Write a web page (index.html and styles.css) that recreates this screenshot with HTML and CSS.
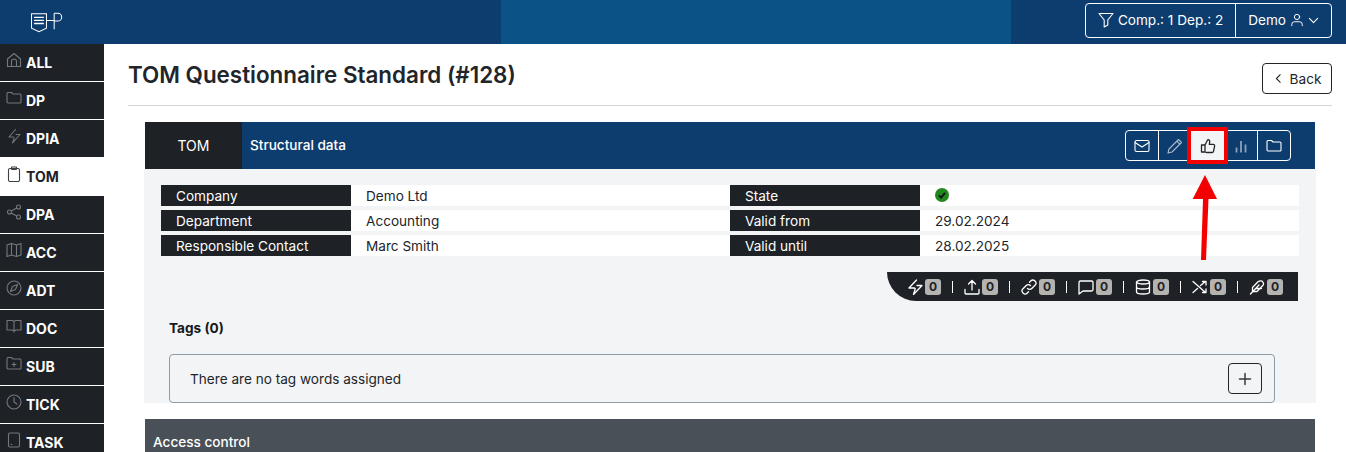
FILE: index.html
```html
<!DOCTYPE html>
<html lang="en">
<head>
    <meta charset="UTF-8">
    <title>TOM Questionnaire Standard</title>
    <link rel="stylesheet" href="styles.css">
</head>
<body>
    <header class="topbar">
        <div class="logo">
            <svg width="34" height="22" viewBox="0 0 33 21" fill="none" stroke="#fff" stroke-width="1">
                <path d="M.5 1.500h14.500v14l-7.250 3.500-7.250-3.500z"/>
                <path d="M3 5h9.500M3 8h9.500M3 11h9.500" stroke-width="1.300"/>
                <path d="M15 8h7.500M22.500 1v15.500M22.500 1h3.500a3.800 3.800 0 0 1 0 7.600h-3.500"/>
            </svg>
        </div>
        <div class="top-actions">
            <div class="top-btn">
                <svg class="ico" viewBox="0 0 16 16"><path d="M1 1.500h14l-5.200 6.500v5l-3.600 2v-7z"/></svg>
                Comp.: 1 Dep.: 2
            </div>
            <div class="top-btn">
                Demo
                <svg class="ico user-ico" viewBox="0 0 16 16"><circle cx="8" cy="4.500" r="3"/><path d="M2 14.500v-1.500a3 3 0 0 1 3-3h6a3 3 0 0 1 3 3v1.500"/></svg>
                <svg class="ico-sm" viewBox="0 0 16 16"><path d="M2 5l6 6 6-6"/></svg>
            </div>
        </div>
    </header>

    <div class="layout">
        <nav class="sidebar">
            <a class="nav-item"><svg class="ico" viewBox="0 0 16 16"><path d="M1.500 14.500V7L8 1.500 14.500 7v7.500zM5.500 14.500v-5a2.500 2.500 0 0 1 5 0v5"/></svg>ALL</a>
            <a class="nav-item"><svg class="ico" viewBox="0 0 16 16"><path d="M1 3.500a1 1 0 0 1 1-1h3.500l1.500 1.500h7a1 1 0 0 1 1 1v7a1 1 0 0 1-1 1H2a1 1 0 0 1-1-1z"/></svg>DP</a>
            <a class="nav-item"><svg class="ico" viewBox="0 0 16 16"><path d="M9.500 1.500L3 9h4.500M10 6.500h4L6.500 15l1.800-5"/></svg>DPIA</a>
            <a class="nav-item active"><svg class="ico" viewBox="0 0 16 16"><rect x="2.500" y="2.500" width="11" height="13" rx="1.500"/><rect x="5.500" y="1" width="5" height="2.500" rx=".5"/></svg>TOM</a>
            <a class="nav-item"><svg class="ico" viewBox="0 0 16 16"><circle cx="12.500" cy="3" r="2"/><circle cx="3.500" cy="8" r="2"/><circle cx="12.500" cy="13" r="2"/><path d="M5.300 7l5.400-3M5.300 9l5.400 3"/></svg>DPA</a>
            <a class="nav-item"><svg class="ico" viewBox="0 0 16 16"><path d="M1 3l4.500-1.500 5 1.500L15 1.500V13l-4.500 1.500-5-1.500L1 14.500zM5.500 1.500V13M10.500 3v11.500"/></svg>ACC</a>
            <a class="nav-item"><svg class="ico" viewBox="0 0 16 16"><circle cx="8" cy="8" r="7"/><path d="M11.500 4.500L9.500 9.500 4.500 11.500 6.500 6.500z"/></svg>ADT</a>
            <a class="nav-item"><svg class="ico" viewBox="0 0 16 16"><path d="M8 3.500v10.500M1 2.500h5.500L8 3.500l1.500-1H15v9.500h-5l-2 1-2-1H1z"/></svg>DOC</a>
            <a class="nav-item"><svg class="ico" viewBox="0 0 16 16"><path d="M1 2.500a1 1 0 0 1 1-1h3.500l1.500 1.500h7a1 1 0 0 1 1 1v8a1 1 0 0 1-1 1H2a1 1 0 0 1-1-1zM8 6.500v4M6 8.500h4"/></svg>SUB</a>
            <a class="nav-item"><svg class="ico" viewBox="0 0 16 16"><circle cx="8" cy="8" r="7"/><path d="M8 3.500V8l3 2"/></svg>TICK</a>
            <a class="nav-item"><svg class="ico" viewBox="0 0 16 16"><rect x="2.500" y="1" width="11" height="14" rx="1.500"/><path d="M5 12.500h.8"/></svg>TASK</a>
        </nav>

        <main class="content">
            <div class="page-head">
                <h1>TOM Questionnaire Standard (#128)</h1>
                <button class="back-btn">
                    <svg class="ico-sm" viewBox="0 0 16 16"><path d="M10.500 2.500L5 8l5.500 5.500"/></svg>
                    Back
                </button>
            </div>

            <section class="panel">
                <div class="panel-head">
                    <div class="panel-tab">TOM</div>
                    <div class="panel-title">Structural data</div>
                    <div class="tool-group">
                        <span class="tool"><svg class="ico" viewBox="0 0 16 16"><rect x="1" y="2.500" width="14" height="11" rx="1.500"/><path d="M1 4.500l7 4.500 7-4.500"/></svg></span>
                        <span class="tool muted"><svg class="ico" viewBox="0 0 16 16"><path d="M11.500 1.500l3 3-9.500 9.500-4 1 1-4zM9.800 3.200l3 3"/></svg></span>
                        <span class="tool highlighted"><svg class="ico" viewBox="0 0 16 16"><path d="M5 7l2.700-5.200c1.300-.3 2.300.6 2 2L9.300 6.300h3.900c1 0 1.600.9 1.400 1.800l-1 5c-.2.800-.8 1.400-1.600 1.400H6.500L5 14H1.500V7zM5 7v7"/></svg></span>
                        <span class="tool bars"><svg class="ico" viewBox="0 0 16 16"><path d="M3.500 9.500v5M8 3v11.500M12.500 6.500v8"/></svg></span>
                        <span class="tool"><svg class="ico" viewBox="0 0 16 16"><path d="M1 3.500a1 1 0 0 1 1-1h3.500l1.500 1.500h7a1 1 0 0 1 1 1v7a1 1 0 0 1-1 1H2a1 1 0 0 1-1-1z"/></svg></span>
                    </div>
                </div>

                <div class="panel-body">
                    <div class="info-grid">
                        <div class="info-label">Company</div><div class="info-value">Demo Ltd</div>
                        <div class="info-label">State</div>
                        <div class="info-value"><span class="state-ok"><svg viewBox="0 0 16 16"><path d="M4.500 8.500l2.500 2.500 4.500-5.500"/></svg></span></div>
                        <div class="info-label">Department</div><div class="info-value">Accounting</div>
                        <div class="info-label">Valid from</div><div class="info-value">29.02.2024</div>
                        <div class="info-label">Responsible Contact</div><div class="info-value">Marc Smith</div>
                        <div class="info-label">Valid until</div><div class="info-value">28.02.2025</div>
                    </div>

                    <div class="counter-row">
                        <div class="counters">
                            <svg class="ico" viewBox="0 0 16 16"><path d="M9.500 1L2 9h5.500M10 6.500h5L6.500 15.500l1.800-6"/></svg><span class="badge">0</span><i class="sep"></i>
                            <svg class="ico" viewBox="0 0 16 16"><path d="M1 10.500V14a1 1 0 0 0 1 1h12a1 1 0 0 0 1-1v-3.500M8 11V1.500M4.500 5L8 1.500 11.500 5"/></svg><span class="badge">0</span><i class="sep"></i>
                            <svg class="ico" viewBox="0 0 16 16"><path d="M6.500 9.500a3 3 0 0 0 4.300 0l3.200-3.200a3 3 0 0 0-4.300-4.300L8.500 3.200M9.500 6.500a3 3 0 0 0-4.300 0L2 9.700A3 3 0 0 0 6.300 14l1.200-1.200"/></svg><span class="badge">0</span><i class="sep"></i>
                            <svg class="ico" viewBox="0 0 16 16"><path d="M2.500 2h11a1.500 1.500 0 0 1 1.500 1.500v7a1.500 1.500 0 0 1-1.500 1.500H5l-4 3V3.500A1.500 1.500 0 0 1 2.500 2z"/></svg><span class="badge">0</span><i class="sep"></i>
                            <svg class="ico" viewBox="0 0 16 16"><ellipse cx="8" cy="3" rx="6.500" ry="2"/><path d="M1.500 3v10c0 1.100 2.900 2 6.500 2s6.500-.9 6.500-2V3M1.500 8c0 1.100 2.900 2 6.500 2s6.500-.9 6.500-2"/></svg><span class="badge">0</span><i class="sep"></i>
                            <svg class="ico" viewBox="0 0 16 16"><path d="M1 2.500l12.500 11M1 13.500l4.500-4M8.500 6.500L13.500 2.500M10.500 2.500h3.500V6M10.500 13.500h3.500V10"/></svg><span class="badge">0</span><i class="sep"></i>
                            <svg class="ico" viewBox="0 0 16 16"><path d="M1.500 15L10 6M3.500 12.500V8.500L9 2.800c1.700-1.500 4-1.200 4.800 0 .9 1.200.8 3-.5 4.200L8 12.500zM6.500 9.500h6"/></svg><span class="badge">0</span>
                        </div>
                    </div>

                    <h2 class="tags-title">Tags (0)</h2>
                    <div class="tags-box">
                        <span>There are no tag words assigned</span>
                        <button class="add-btn"><svg class="ico" viewBox="0 0 16 16"><path d="M8 2.500v11M2.500 8h11" stroke-width="1.500"/></svg></button>
                    </div>
                </div>

                <div class="section-bar">Access control</div>
            </section>
        </main>
    </div>

    <!-- annotation added on the screenshot -->
    <div class="arrow">
        <svg width="30" height="90" viewBox="0 0 30 90"><path d="M14 3L26 27H17.500L15 88H10L12 27H1.700z" fill="#f40000"/></svg>
    </div>
</body>
</html>
```

FILE: styles.css
```css
* {
    box-sizing: border-box;
}

html, body {
    height: 452px;
    overflow: hidden;
}

body {
    margin: 0;
    font-family: Inter, "Liberation Sans", sans-serif;
    font-size: 13.6px;
    color: #212529;
    background: #ffffff;
    position: relative;
}

.ico, .ico-sm {
    width: 16px;
    height: 16px;
    fill: none;
    stroke: currentColor;
    stroke-width: 1.100;
    stroke-linecap: round;
    stroke-linejoin: round;
    flex: none;
}

.ico-sm {
    width: 11px;
    height: 11px;
    stroke-width: 1.600;
}

.topbar {
    height: 44px;
    display: flex;
    justify-content: space-between;
    align-items: center;
    padding: 0 14px 0 31px;
    background: linear-gradient(90deg, #0d3c6e 501px, #0b5286 501px, #0b5286 1011px, #0d3c6e 1011px);
}

.logo {
    display: flex;
    margin-top: 1px;
}

.top-actions {
    display: flex;
    height: 35px;
    border: 1px solid #ffffff;
    border-radius: 4px;
    color: #ffffff;
    margin-top: -4px;
}

.top-btn {
    display: flex;
    align-items: center;
    gap: 4px;
    padding: 0 12px;
}

.top-btn + .top-btn {
    border-left: 1px solid #ffffff;
}

.user-ico {
    width: 14px;
    height: 14px;
}

.layout {
    display: flex;
}

.sidebar {
    width: 104px;
    flex: none;
}

.nav-item {
    display: flex;
    align-items: center;
    gap: 4px;
    height: 38px;
    padding: 0 0 0 6px;
    background: #1e2126;
    color: #ffffff;
    font-weight: 700;
    font-size: 14px;
    border-bottom: 1px solid #ffffff;
    line-height: 1;
}

.nav-item .ico {
    color: #75787c;
    margin-top: -6px;
}

.nav-item.active {
    background: #ffffff;
    color: #1e2126;
}

.nav-item.active .ico {
    color: #3c4045;
}

.content {
    flex: 1;
    padding: 0 14px 0 24px;
}

.page-head {
    display: flex;
    justify-content: space-between;
    height: 62px;
    padding-top: 18px;
    border-bottom: 1px solid #d5d5d5;
}

h1 {
    margin: 0;
    font-size: 22.400px;
    font-weight: 600;
    line-height: 26px;
    color: #212529;
}

.back-btn {
    height: 31px;
    width: 70px;
    display: flex;
    align-items: center;
    justify-content: center;
    gap: 6px;
    font: 13.6px Inter, "Liberation Sans", sans-serif;
    color: #212529;
    background: #ffffff;
    border: 1px solid #212529;
    border-radius: 4px;
    margin-top: 1px;
}

.panel {
    margin: 16px 17px 0;
}

.panel-head {
    height: 47px;
    display: flex;
    align-items: center;
    background: #0d3c6e;
    color: #ffffff;
}

.panel-tab {
    width: 97px;
    height: 100%;
    display: flex;
    align-items: center;
    justify-content: center;
    background: #1e2126;
    font-size: 14px;
}

.panel-title {
    flex: 1;
    padding: 0 0 2px 8px;
    font-weight: 500;
}

.tool-group {
    display: flex;
    width: 166px;
    height: 31px;
    margin-right: 24px;
    border: 1px solid #ffffff;
    border-radius: 4px;
}

.tool {
    flex: 1;
    display: flex;
    align-items: center;
    justify-content: center;
}

.tool svg {
    width: 16px;
    height: 16px;
}

.tool + .tool {
    border-left: 1px solid #ffffff;
}

.tool.muted {
    color: #a9bccf;
}

.tool.bars {
    color: #8ca2b8;
}

.tool.bars svg {
    stroke-width: 1.800;
    stroke-linecap: butt;
}

.tool.highlighted {
    color: #212529;
    background: #f3f4f6;
    border: 0;
    outline: 4px solid #f40000;
    z-index: 1;
}

.tool.highlighted svg {
    stroke-width: 1.300;
}

.panel-body {
    height: 234px;
    margin: 0 -1px 16px;
    padding: 16px 17px 0;
    background: #f3f4f6;
}

.info-grid {
    display: grid;
    grid-template-columns: 190px 379px 190px 379px;
    grid-auto-rows: 21px;
    row-gap: 4px;
}

.info-label {
    background: #1e2126;
    color: #ffffff;
    padding-left: 15px;
    line-height: 23px;
}

.info-value {
    background: #ffffff;
    padding-left: 15px;
    line-height: 23px;
    color: #212529;
}

.state-ok {
    width: 14px;
    height: 14px;
    margin-top: 3px;
    border-radius: 50%;
    background: #22871f;
    display: flex;
}

.state-ok svg {
    fill: none;
    stroke: #10151a;
    stroke-width: 2.200;
}

.counter-row {
    display: flex;
    justify-content: flex-end;
    margin: 16px 1px 0 0;
}

.counters {
    display: flex;
    align-items: center;
    height: 29px;
    padding: 0 0 0 20px;
    width: 411px;
    background: #1e2126;
    color: #ffffff;
    border-bottom-left-radius: 29px;
}

.counters .ico {
    stroke-width: 1.300;
}

.badge {
    width: 16px;
    height: 16px;
    margin-left: 2px;
    border-radius: 3px;
    background: #b5b3b0;
    color: #1e2126;
    font-size: 12px;
    font-weight: 700;
    line-height: 16px;
    text-align: center;
}

.sep {
    width: 1px;
    height: 12px;
    background: #ffffff;
    margin: 0 11px;
}

.tags-title {
    margin: 19px 0 0 8px;
    font-size: 13.6px;
    font-weight: 700;
    line-height: 17px;
    color: #16191c;
}

.tags-box {
    display: flex;
    justify-content: space-between;
    align-items: center;
    height: 49px;
    margin: 17px 24px 0 8px;
    padding: 0 12px 0 20px;
    border: 1px solid #8f9ba6;
    border-radius: 4px;
}

.add-btn {
    width: 34px;
    height: 31px;
    display: flex;
    align-items: center;
    justify-content: center;
    padding: 0;
    color: #343a40;
    background: transparent;
    border: 1px solid #212529;
    border-radius: 4px;
}

.section-bar {
    height: 33px;
    padding: 15px 8px 0;
    background: #495057;
    color: #ffffff;
    font-weight: 500;
    line-height: 16px;
}

.arrow {
    position: absolute;
    left: 1191px;
    top: 172px;
    line-height: 0;
}
```
